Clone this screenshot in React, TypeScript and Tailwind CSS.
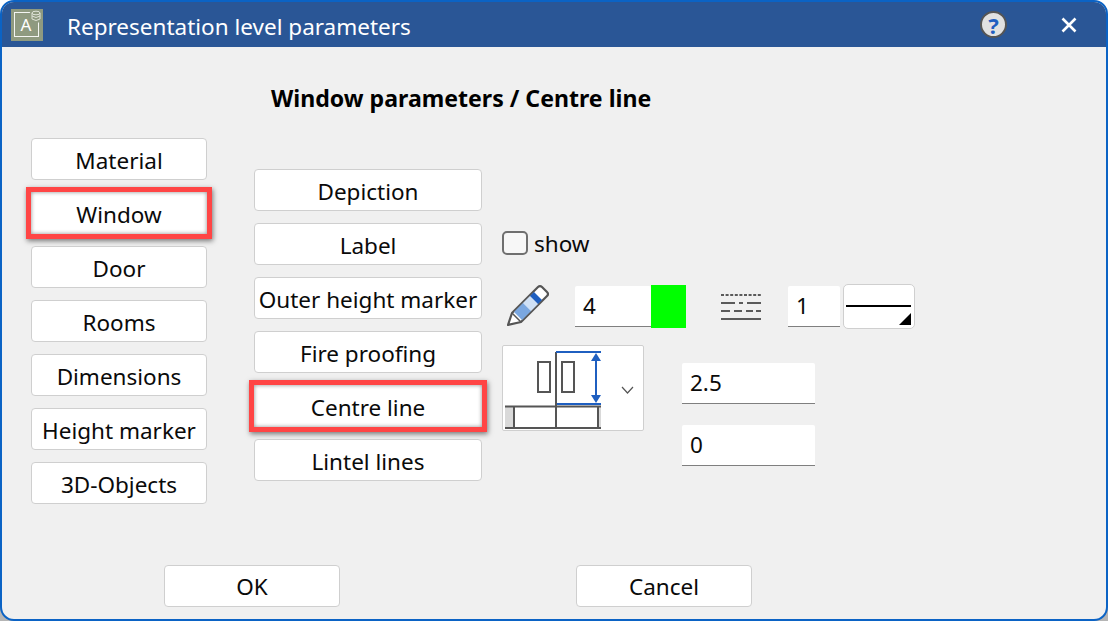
import { type ReactNode } from 'react'

const leftItems = ['Material', 'Window', 'Door', 'Rooms', 'Dimensions', 'Height marker', '3D-Objects']
const middleItems = ['Depiction', 'Label', 'Outer height marker', 'Fire proofing', 'Centre line', 'Lintel lines']

function NavButton({ label, selected }: { label: string; selected?: boolean }) {
  return (
    <button
      className={
        selected
          ? 'h-[42px] w-full pt-[4px] bg-white text-[22.5px] text-[#0a0a0a] whitespace-nowrap shadow-[0_0_0_5px_#ff4545,1px_2px_5px_5px_rgba(0,0,0,0.5),inset_0_0_4px_rgba(0,0,0,0.45)]'
          : 'h-[42px] w-full pt-[4px] bg-white text-[22.5px] text-[#0a0a0a] whitespace-nowrap rounded-[4px] border border-[#cfcfcf]'
      }
    >
      {label}
    </button>
  )
}

function Field({ value, className }: { value: string; className: string }) {
  return (
    <div className={`bg-white border-b border-[#7f7f7f] flex items-center pl-[8px] text-[22.5px] text-[#0a0a0a] rounded-t-[2px] ${className}`}>
      {value}
    </div>
  )
}

function FooterButton({ children, className }: { children: ReactNode; className: string }) {
  return (
    <button className={`h-[42px] w-[176px] pt-[1px] bg-white rounded-[4px] border border-[#cfcfcf] text-[22.5px] text-[#0a0a0a] ${className}`}>
      {children}
    </button>
  )
}

function Pencil() {
  return (
    <svg width="42" height="44" viewBox="0 0 42 44" className="shrink-0">
      <path d="M1 41 L5 29 L31 3 Q33 1 35 3 L40 8 Q42 10 40 12 L14 38 Z" fill="#fff" stroke="#555" strokeWidth="2.2" strokeLinejoin="round" />
      <path d="M23 12 L31 20 L24 27 L16 19 Z" fill="#cfe0f5" />
      <path d="M16 19 L24 27 L15 36 L7 28 Z" fill="#7aa7e0" />
      <path d="M27 8 L35 16 L31 20 L23 12 Z" fill="#1f5fc0" />
      <path d="M5 29 L14 38" stroke="#555" strokeWidth="1.5" fill="none" />
    </svg>
  )
}

function LineStyles() {
  return (
    <svg width="42" height="28" viewBox="0 0 42 28" className="shrink-0">
      <g stroke="#5a5a5a" strokeWidth="2" fill="none">
        <path d="M1 3 H41" strokeDasharray="3 1.6" />
        <path d="M1 11 H15 M19 11 H23 M27 11 H41" />
        <path d="M1 19 H10 M14 19 H22 M26 19 H33 M36 19 H41" />
        <path d="M1 27 H41" />
      </g>
    </svg>
  )
}

function HeightPicker() {
  return (
    <svg width="142" height="86" viewBox="1 0 142 86" className="block">
      <rect x="3" y="60" width="9" height="22" fill="#d9d9d9" />
      <rect x="96" y="60" width="3" height="22" fill="#d9d9d9" />
      <g stroke="#555" strokeWidth="2" fill="none">
        <rect x="36" y="16" width="12" height="30" />
        <rect x="60" y="16" width="12" height="30" />
        <path d="M54 6 V82 M3 60.5 H99 M3 82 H99 M12 60 V82 M96 60 V82" />
      </g>
      <g stroke="#1f5fc0" strokeWidth="2" fill="none">
        <path d="M54 6 H99 M55 58 H99 M94 10 V54" />
      </g>
      <path d="M94 7 L99 15 H89 Z M94 57 L99 49 H89 Z" fill="#1f5fc0" />
      <path d="M120 41 L125.5 47 L131 41" stroke="#555" strokeWidth="1.2" fill="none" />
    </svg>
  )
}

export default function App() {
  return (
    <div className="w-[1108px] h-[621px] bg-gradient-to-b from-white from-50% to-[#b5b5b5] to-50% font-['Noto_Sans','Open_Sans',sans-serif]">
      <div className="w-full h-full flex flex-col rounded-[14px] border-2 border-[#0b63c5] bg-[#f0f0f0] overflow-hidden">
        {/* Title bar */}
        <div className="h-[45px] shrink-0 bg-[#2a5696] flex items-center pl-[9px] pr-[29px]">
          <div className="relative w-[32px] h-[32px] bg-[#8f9a80] flex items-center justify-center">
            <div className="w-[25px] h-[25px] border border-white/90 flex items-center justify-center text-white text-[17px] leading-none -translate-x-[1px]">A</div>
            <svg width="14" height="14" viewBox="0 0 14 14" className="absolute right-0 top-0">
              <circle cx="7" cy="7" r="7" fill="#8f9a80" />
              <g stroke="#dfe3d8" strokeWidth="1" fill="none">
                <ellipse cx="7" cy="4" rx="4" ry="1.8" />
                <path d="M3 4 V10 Q7 13 11 10 V4 M3 7 Q7 10 11 7" />
              </g>
            </svg>
          </div>
          <div className="ml-[24px] pt-[5px] text-[22.5px] text-white">Representation level parameters</div>
          <div className="ml-auto w-[27px] h-[27px] rounded-full bg-[#e1e1e1] border-2 border-[#555] flex items-center justify-center text-[22px] leading-none font-bold text-[#1f5fc0]">?</div>
          <svg width="16" height="16" viewBox="0 0 16 16" className="ml-[54px]">
            <path d="M1.5 1.5 L14.5 14.5 M14.5 1.5 L1.5 14.5" stroke="#fff" strokeWidth="2.6" />
          </svg>
        </div>

        {/* Heading */}
        <div className="h-[45px] pl-[269px] pt-[34px] text-[23.1px] font-bold text-black leading-[34px] whitespace-nowrap">
          Window parameters / Centre line
        </div>

        <div className="flex items-start pt-[46px] pl-[29px]">
          <div className="w-[176px] flex flex-col gap-3">
            {leftItems.map((item) => (
              <NavButton key={item} label={item} selected={item === 'Window'} />
            ))}
          </div>

          <div className="w-[228px] ml-[47px] mt-[31px] flex flex-col gap-3">
            {middleItems.map((item) => (
              <NavButton key={item} label={item} selected={item === 'Centre line'} />
            ))}
          </div>

          <div className="ml-[20px] mt-[93px] flex flex-col">
            <div className="flex items-center h-[24px]">
              <div className="w-[26px] h-[24px] rounded-[5px] border-2 border-[#6f6f6f] bg-[#f7f7f7]" />
              <span className="ml-[6px] pt-[2px] text-[22.5px] text-[#0a0a0a]">show</span>
            </div>

            <div className="flex items-center mt-[28px] h-[46px]">
              <div className="ml-[5px]"><Pencil /></div>
              <Field value="4" className="ml-[26px] w-[76px] h-[41px]" />
              <div className="w-[35px] h-[43px] bg-[#00ff00]" />
              <div className="ml-[34px]"><LineStyles /></div>
              <Field value="1" className="ml-[26px] w-[52px] h-[41px]" />
              <div className="relative ml-[3px] w-[72px] h-[45px] bg-white rounded-[5px] border border-[#cfcfcf]">
                <div className="mt-[20px] ml-[2px] mr-[3px] h-[2px] bg-black" />
                <div className="absolute right-[3px] bottom-[3px] w-0 h-0 border-l-[12px] border-l-transparent border-b-[12px] border-b-black" />
              </div>
            </div>

            <div className="flex items-start mt-[16px]">
              <div className="w-[142px] h-[86px] bg-white rounded-[2px] border border-[#cfcfcf] overflow-hidden">
                <HeightPicker />
              </div>
              <div className="ml-[38px] mt-[18px] flex flex-col gap-[21px]">
                <Field value="2.5" className="w-[133px] h-[41px]" />
                <Field value="0" className="w-[133px] h-[41px]" />
              </div>
            </div>
          </div>
        </div>

        {/* Footer buttons */}
        <div className="flex pl-[162px] mt-[61px]">
          <FooterButton className="">OK</FooterButton>
          <FooterButton className="ml-[236px]">Cancel</FooterButton>
        </div>
      </div>
    </div>
  )
}
